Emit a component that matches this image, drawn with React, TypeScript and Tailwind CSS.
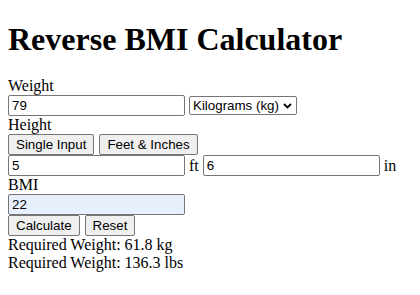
import { ReactNode } from "react";

const serif = "font-['Liberation_Serif',serif]";
const sans = "font-['Liberation_Sans',Arial,sans-serif] text-[13.33px] text-black";

function Field({ value, filled }: { value: string; filled?: boolean }) {
    return (
        <input
            readOnly
            value={value}
            className={`${sans} h-[21px] w-[177px] rounded-[2px] border border-[#767676] px-[3px] leading-[15px] outline-none ${
                filled ? "bg-[#e8f0fe]" : "bg-white"
            }`}
        />
    );
}

function Btn({ children }: { children: ReactNode }) {
    return (
        <button
            className={`${sans} h-[21px] rounded-[2px] border border-[#767676] bg-[#efefef] px-[7px] leading-[15px]`}
        >
            {children}
        </button>
    );
}

export default function App() {
    return (
        <main className={`${serif} min-h-screen bg-white px-[8px] text-[16px] text-black`}>
            <h1 className="pt-[21px] pb-[20px] text-[32px] leading-[36px] font-bold">Reverse BMI Calculator</h1>

            <div className="leading-[18px]">Weight</div>
            <div className="flex h-[21px] items-center gap-[4px]">
                <Field value="79" />
                <div
                    className={`${sans} flex h-[19px] w-[108px] items-center justify-between rounded-[2px] border border-[#767676] bg-white pr-[4px] pl-[3px]`}
                >
                    <span>Kilograms (kg)</span>
                    <svg width="9" height="6" viewBox="0 0 9 6" fill="none">
                        <path d="M1 1l3.5 3.5L8 1" stroke="#000" strokeWidth="1.8" />
                    </svg>
                </div>
            </div>

            <div className="leading-[18px]">Height</div>
            <div className="flex h-[21px] items-center gap-[5px]">
                <Btn>Single Input</Btn>
                <Btn>Feet &amp; Inches</Btn>
            </div>
            <div className="flex h-[21px] items-center">
                <Field value="5" />
                <span className="mx-[4px] leading-[18px]">ft</span>
                <Field value="6" />
                <span className="ml-[4px] leading-[18px]">in</span>
            </div>

            <div className="leading-[18px]">BMI</div>
            <div className="flex h-[21px] items-center">
                <Field value="22" filled />
            </div>
            <div className="flex h-[21px] items-center gap-[5px]">
                <Btn>Calculate</Btn>
                <Btn>Reset</Btn>
            </div>

            <div className="leading-[18px]">Required Weight: 61.8 kg</div>
            <div className="leading-[18px]">Required Weight: 136.3 lbs</div>
        </main>
    );
}
